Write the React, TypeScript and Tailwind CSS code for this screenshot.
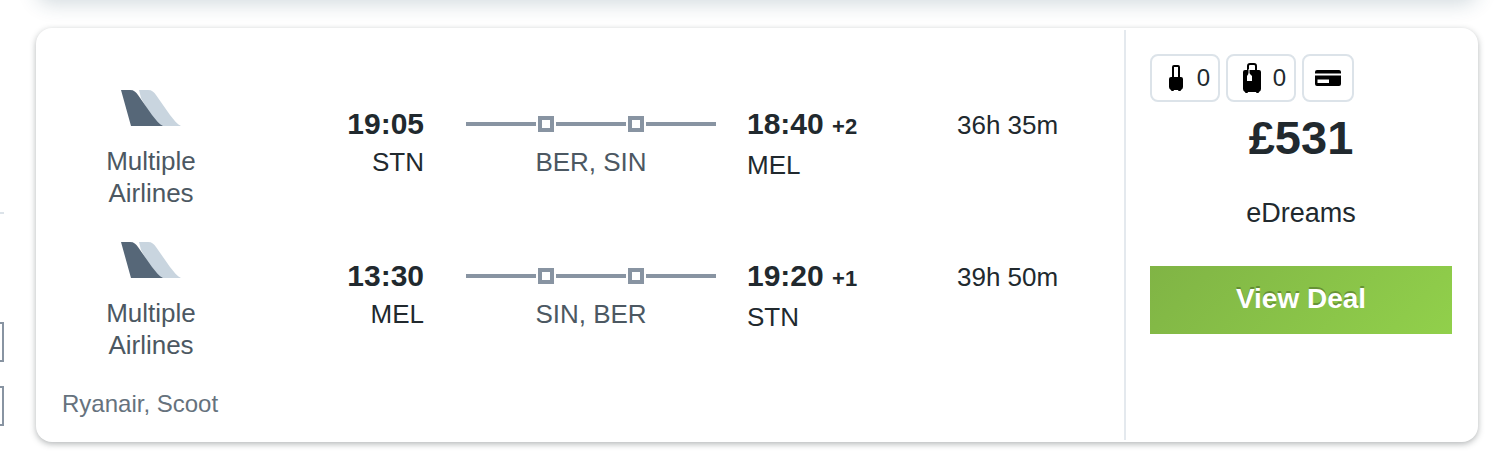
import { Fragment } from "react";

type Leg = {
  depart: string; from: string;
  arrive: string; to: string;
  days: string; stops: string[]; duration: string;
};

const legs: Leg[] = [
  { depart: "19:05", from: "STN", arrive: "18:40", to: "MEL", days: "+2", stops: ["BER", "SIN"], duration: "36h 35m" },
  { depart: "13:30", from: "MEL", arrive: "19:20", to: "STN", days: "+1", stops: ["SIN", "BER"], duration: "39h 50m" },
];

export default function App() {
  return (
    <div className="flex overflow-hidden bg-white text-[#21292e] font-['Liberation_Sans',Arial,sans-serif]">
      <Filters />
      <main className="flex-1 min-w-0 pl-8 pr-7 pb-[22px]">
        {/* bottom edge of the previous result */}
        <div className="h-8 -mt-8 rounded-2xl shadow-[0_4px_20px_rgba(37,75,95,0.2)]" />
        <article className="flex mt-7 py-0.5 rounded-2xl bg-white shadow-[0_2px_6px_rgba(37,45,50,0.35)]">
          <section className="flex-1 min-w-0 pl-[26px] pt-15 pb-5">
            <div className="space-y-[33px]">
              {legs.map(leg => <LegRow key={leg.depart} leg={leg} />)}
            </div>
            <p className="mt-[27px] text-2xl leading-8 text-[#66727d]">Ryanair, Scoot</p>
          </section>
          <Deal />
        </article>
      </main>
    </div>
  );
}

function Filters() {
  return (
    <aside className="w-1 shrink-0 pt-[212px] flex flex-col items-end">
      <hr className="w-full border-0 h-0.5 bg-[#dce3e9]" />
      <input type="checkbox" aria-label="Airline" className="appearance-none shrink-0 size-10 mt-27 border-2 border-[#8894a2] bg-white" />
      <input type="checkbox" aria-label="Airport" className="appearance-none shrink-0 size-10 mt-6 border-2 border-[#8894a2] bg-white" />
    </aside>
  );
}

function LegRow({ leg }: { leg: Leg }) {
  return (
    <div className="grid grid-cols-[178fr_184fr_42fr_250fr_31fr_210fr_167fr] text-[26px] leading-8">
      <div className="flex flex-col items-center text-center text-[#4c5862]">
        <TailLogo />
        <span className="mt-[19px] w-30">Multiple Airlines</span>
      </div>
      <div className="pt-4 text-right">
        <div className="text-3xl leading-9 font-bold">{leg.depart}</div>
        <div className="mt-1">{leg.from}</div>
      </div>
      <div className="col-start-4 pt-4 text-center text-[#4c5862]">
        <div className="flex items-center gap-0.5 h-9">
          {leg.stops.map(stop => (
            <Fragment key={stop}>
              <span className="flex-1 h-1 bg-[#8894a2]" />
              <span className="size-4 border-4 border-[#8894a2]" />
            </Fragment>
          ))}
          <span className="flex-1 h-1 bg-[#8894a2]" />
        </div>
        <div className="mt-1">{leg.stops.join(", ")}</div>
      </div>
      <div className="col-start-6 pt-4">
        <div className="text-3xl leading-9 font-bold">{leg.arrive} <span className="text-[22px]">{leg.days}</span></div>
        <div className="mt-1">{leg.to}</div>
      </div>
      <div className="pt-4 leading-[38px] font-medium">{leg.duration}</div>
    </div>
  );
}

function Deal() {
  return (
    <aside className="w-[354px] shrink-0 border-l-2 border-[#e4e9ee] pl-6 pr-[26px] pt-6 flex flex-col items-center text-center">
      <ul className="self-start flex gap-1.5 text-2xl">
        <li className="flex items-center justify-between w-[70px] h-12 pl-4 pr-2 border-2 border-[#dce3e9] rounded-lg">
          <CabinBag /><span>0</span>
        </li>
        <li className="flex items-center justify-between w-[70px] h-12 pl-3.5 pr-2 border-2 border-[#dce3e9] rounded-lg">
          <Suitcase /><span>0</span>
        </li>
        <li className="flex items-center justify-center w-[52px] h-12 border-2 border-[#dce3e9] rounded-lg">
          <Card />
        </li>
      </ul>
      <div className="mt-2 text-[47px] leading-14 font-bold">£531</div>
      <div className="mt-[31px] text-[27px] leading-8">eDreams</div>
      <button className="mt-[37px] w-full h-17 pb-0.5 bg-linear-[135deg] from-[#80b445] to-[#91d04b] text-white text-[28px] font-bold [text-shadow:0_-2px_0_rgba(0,0,0,0.25)]">View Deal</button>
    </aside>
  );
}

function TailLogo() {
  return (
    <svg width="60" height="36" viewBox="0 0 60 36" aria-hidden="true">
      <path d="M18 0h9c4 0 6 2 8 5l14 20c4 5 7 9 11 11H36L20 8z" fill="#c9d5df" />
      <path d="M0 0h9c4 0 6 2 8 5l14 20c4 5 7 9 11 11H10z" fill="#566778" />
    </svg>
  );
}

function CabinBag() {
  return (
    <svg width="16" height="28" viewBox="0 0 16 28" aria-hidden="true">
      <path d="M5 13V3q0-1 1-1h4q1 0 1 1v10" fill="none" stroke="#000" strokeWidth="2" />
      <path d="M3 13h10q2 0 2 2v8q0 2-2 3l-.5 1h-2l-.5-1H6l-.5 1h-2L3 26q-2-1-2-3v-8q0-2 2-2z" />
    </svg>
  );
}

function Suitcase() {
  return (
    <svg width="20" height="32" viewBox="0 0 20 32" aria-hidden="true">
      <path d="M6 8V4q0-2 2-2h4q2 0 2 2v4" fill="none" stroke="#000" strokeWidth="2" />
      <path d="M3 8h14q2 0 2 2v17q0 2-2 3l-.5 1h-2l-.5-1H6l-.5 1h-2L3 30q-2-1-2-3V10q0-2 2-2z" />
      <path d="M7 7v5" stroke="#fff" strokeWidth="1" />
      <path d="M7 11l3 3v5H5v-5z" fill="#fff" />
    </svg>
  );
}

function Card() {
  return (
    <svg width="26" height="16" viewBox="0 0 26 16" aria-hidden="true">
      <path d="M2 0h22q2 0 2 2v1.500H0V2q0-2 2-2zM0 5.500h26V14q0 2-2 2H2q-2 0-2-2zM2.500 9.500v3.500h11.500V9.500z" fillRule="evenodd" />
    </svg>
  );
}
